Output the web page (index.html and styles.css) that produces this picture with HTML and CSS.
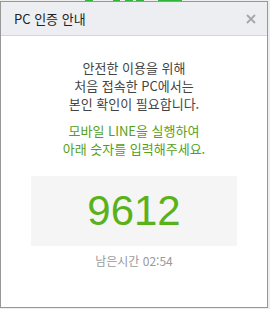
FILE: index.html
```html
<!DOCTYPE html>
<html lang="ko">
<head>
    <meta charset="UTF-8">
    <meta name="viewport" content="width=device-width, initial-scale=1.0">
    <title>PC 인증 안내</title>
    <link rel="stylesheet" href="styles.css">
</head>
<body>
    <div class="logo-strip">
        <span class="seg seg-a"></span>
        <span class="seg seg-b"></span>
        <span class="seg seg-c"></span>
        <span class="seg seg-d"></span>
        <span class="seg seg-e"></span>
    </div>
    <div class="dialog">
        <div class="dialog-header">
            <h2>PC 인증 안내</h2>
            <button class="close-btn" aria-label="닫기">
                <svg width="10" height="10" viewBox="0 0 10 10">
                    <path d="M1 1 L9 9 M9 1 L1 9" stroke="#a3a6aa" stroke-width="1.8" fill="none"/>
                </svg>
            </button>
        </div>
        <div class="dialog-body">
            <p class="notice">안전한 이용을 위해<br>처음 접속한 PC에서는<br>본인 확인이 필요합니다.</p>
            <p class="guide">모바일 LINE을 실행하여<br>아래 숫자를 입력해주세요.</p>
            <div class="code-box">9612</div>
            <p class="timer">남은시간 02:54</p>
        </div>
    </div>
</body>
</html>
```

FILE: styles.css
```css
body {
    margin: 0;
    background-color: #eeeeee;
    font-family: "Noto Sans CJK KR", "Noto Sans", sans-serif;
    width: 270px;
    height: 309px;
    overflow: hidden;
}
.logo-strip {
    display: flex;
    height: 1px;
}
.seg {
    display: block;
    height: 1px;
    background-color: #2fb53a;
}
.seg-a { margin-left: 85px; width: 8px; }
.seg-b { margin-left: 20px; width: 7px; }
.seg-c { margin-left: 5px; width: 8px; }
.seg-d { margin-left: 3px; width: 8px; }
.seg-e { margin-left: 14px; width: 24px; }
.dialog {
    width: 266px;
    height: 305px;
    border: 1px solid #979797;
    background: white;
}
.dialog-header {
    display: flex;
    justify-content: space-between;
    align-items: center;
    height: 33px;
    background-color: #eceef1;
    border-bottom: 1px solid #d2d5d9;
    padding: 0 11px 0 13px;
}
h2 {
    margin: 0;
    font-size: 13px;
    font-weight: normal;
    color: #222;
}
.close-btn {
    border: none;
    background: none;
    padding: 0;
    width: 10px;
    height: 10px;
    display: flex;
}
.dialog-body {
    display: flex;
    flex-direction: column;
    align-items: center;
    padding-top: 23px;
    text-align: center;
}
.notice {
    margin: 0;
    font-size: 13px;
    line-height: 18px;
    color: #444;
}
.guide {
    margin: 9px 0 0;
    font-size: 13px;
    line-height: 18px;
    color: #55a01a;
}
.code-box {
    margin-top: 18px;
    width: 206px;
    height: 70px;
    background-color: #f5f5f5;
    display: flex;
    justify-content: center;
    align-items: center;
    font-family: "Liberation Sans", Arial, sans-serif;
    font-size: 42px;
    color: #5ab21b;
}
.timer {
    margin: 7px 0 0;
    font-size: 12px;
    line-height: 16px;
    color: #9a9a9a;
}
```
